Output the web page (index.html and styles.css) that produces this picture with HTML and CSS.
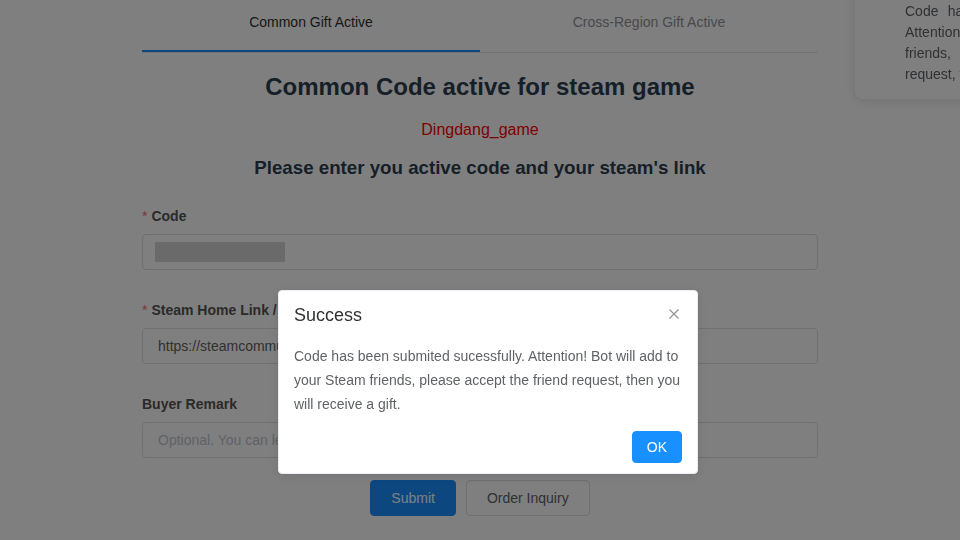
FILE: index.html
```html
<!DOCTYPE html>
<html lang="en">
<head>
<meta charset="utf-8">
<title>Common Code active for steam game</title>
<link rel="stylesheet" href="styles.css">
</head>
<body>
<div class="page">
  <div class="tabs">
    <div class="tab active">Common Gift Active</div>
    <div class="tab">Cross-Region Gift Active</div>
  </div>
  <h2 class="title">Common Code active for steam game</h2>
  <p class="shop">Dingdang_game</p>
  <h3 class="subtitle">Please enter you active code and your steam's link</h3>
  <form class="form">
    <div class="item">
      <label class="label"><span class="req">*</span>Code</label>
      <div class="input code"><span class="redact"></span></div>
    </div>
    <div class="item">
      <label class="label"><span class="req">*</span>Steam Home Link / Trade Link</label>
      <div class="input">https://steamcommunity.com/profiles/76561198000000000</div>
    </div>
    <div class="item">
      <label class="label">Buyer Remark</label>
      <div class="input placeholder">Optional. You can leave a message for the seller</div>
    </div>
    <div class="actions">
      <button type="button" class="btn primary">Submit</button>
      <button type="button" class="btn">Order Inquiry</button>
    </div>
  </form>
</div>

<div class="notify">
  <svg class="notify-icon" width="24" height="24" viewBox="0 0 24 24"><circle cx="12" cy="12" r="11" fill="#67c23a"/><path d="M7 12.5l3.5 3.5L17 9" fill="none" stroke="#fff" stroke-width="2"/></svg>
  <div class="notify-group">
    <div class="notify-title">Success</div>
    <p class="notify-content">Code has been submited sucessfully. Attention! Bot will add to your Steam friends, please accept the friend request, then you will receive a gift.</p>
  </div>
</div>

<div class="overlay"></div>

<div class="msgbox">
  <div class="msgbox-header">
    <span class="msgbox-title">Success</span>
    <button type="button" class="msgbox-close" aria-label="Close">
      <svg width="10" height="10" viewBox="0 0 10 10"><path d="M0.5 0.5L9.5 9.5M9.5 0.5L0.5 9.5" stroke="#909399" stroke-width="1.2" fill="none"/></svg>
    </button>
  </div>
  <div class="msgbox-content">Code has been submited sucessfully. Attention! Bot will add to your Steam friends, please accept the friend request, then you will receive a gift.</div>
  <div class="msgbox-btns">
    <button type="button" class="ok">OK</button>
  </div>
</div>
</body>
</html>
```

FILE: styles.css
```css
html, body {
  margin: 0;
  padding: 0;
  overflow: hidden;
  background: #fff;
  font-family: "Liberation Sans", Arial, sans-serif;
}

.page {
  width: 676px;
  margin: 0 auto;
}

.tabs {
  display: flex;
  border-bottom: 1px solid #e4e7ed;
}

.tab {
  flex: 1;
  height: 52px;
  line-height: 44px;
  text-align: center;
  font-size: 14px;
  color: #909399;
  box-sizing: border-box;
}

.tab.active {
  color: #303133;
  border-bottom: 2px solid #1890ff;
}

.title {
  margin: 20px 0 0;
  font-size: 24px;
  line-height: 28px;
  font-weight: bold;
  text-align: center;
  color: #2c3e50;
}

.shop {
  margin: 19px 0 0;
  font-size: 16px;
  line-height: 20px;
  text-align: center;
  color: #ff0000;
}

.subtitle {
  margin: 17px 0 0;
  font-size: 18.72px;
  line-height: 22px;
  font-weight: bold;
  text-align: center;
  color: #2c3e50;
}

.form {
  margin: 19px 0 0;
  display: flex;
  flex-direction: column;
  gap: 22px;
}

.item {
  padding-top: 8px;
}

.label {
  display: block;
  font-size: 14px;
  line-height: 20px;
  font-weight: bold;
  color: #555;
  margin-bottom: 8px;
  white-space: nowrap;
}

.req {
  color: #f56c6c;
  font-weight: normal;
  margin-right: 4px;
}

.input {
  box-sizing: border-box;
  height: 36px;
  border: 1px solid #dcdfe6;
  border-radius: 4px;
  padding: 0 15px;
  line-height: 34px;
  font-size: 14px;
  color: #606266;
  white-space: nowrap;
  overflow: hidden;
}

.input.code {
  display: flex;
  align-items: center;
  padding-left: 12px;
}

.redact {
  display: block;
  width: 130px;
  height: 20px;
  background: #d4d4d4;
}

.input.placeholder {
  color: #c0c4cc;
}

.actions {
  display: flex;
  justify-content: center;
  gap: 10px;
}

.btn {
  box-sizing: border-box;
  height: 36px;
  padding: 0 20px;
  border: 1px solid #dcdfe6;
  border-radius: 4px;
  background: #fff;
  color: #606266;
  font-family: "Liberation Sans", Arial, sans-serif;
  font-size: 14px;
  line-height: 34px;
}

.btn.primary {
  background: #1890ff;
  border-color: #1890ff;
  color: #fff;
}

.notify {
  position: fixed;
  top: -44px;
  left: 854px;
  width: 330px;
  box-sizing: border-box;
  display: flex;
  padding: 14px 26px 14px 13px;
  background: #fff;
  border: 1px solid #ebeef5;
  border-radius: 8px;
  box-shadow: 0 2px 12px rgba(0, 0, 0, 0.1);
  z-index: 1;
}

.notify-icon {
  flex: none;
}

.notify-group {
  margin-left: 13px;
  flex: 1;
}

.notify-title {
  font-size: 16px;
  line-height: 24px;
  font-weight: bold;
  color: #303133;
}

.notify-content {
  margin: 6px 0 0;
  font-size: 14px;
  line-height: 21px;
  color: #606266;
  text-align: justify;
}

.overlay {
  position: fixed;
  inset: 0;
  background: rgba(0, 0, 0, 0.5);
  z-index: 2;
}

.msgbox {
  position: fixed;
  top: 290px;
  left: 278px;
  width: 420px;
  box-sizing: border-box;
  padding-bottom: 10px;
  background: #fff;
  border: 1px solid #ebeef5;
  border-radius: 4px;
  box-shadow: 0 2px 12px rgba(0, 0, 0, 0.1);
  z-index: 3;
}

.msgbox-header {
  position: relative;
  padding: 15px 15px 10px;
}

.msgbox-title {
  display: block;
  font-size: 18px;
  line-height: 18px;
  color: #303133;
}

.msgbox-close {
  position: absolute;
  top: 15px;
  right: 15px;
  width: 16px;
  height: 16px;
  padding: 0;
  border: 0;
  background: transparent;
  display: flex;
  align-items: center;
  justify-content: center;
}

.msgbox-content {
  padding: 10px 15px;
  font-size: 14px;
  line-height: 24px;
  color: #606266;
}

.msgbox-btns {
  padding: 5px 15px 0;
  display: flex;
  justify-content: flex-end;
}

.ok {
  box-sizing: border-box;
  height: 32px;
  padding: 0 14px;
  border: 1px solid #1890ff;
  border-radius: 4px;
  background: #1890ff;
  color: #fff;
  font-family: "Liberation Sans", Arial, sans-serif;
  font-size: 14px;
  line-height: 30px;
}
```
